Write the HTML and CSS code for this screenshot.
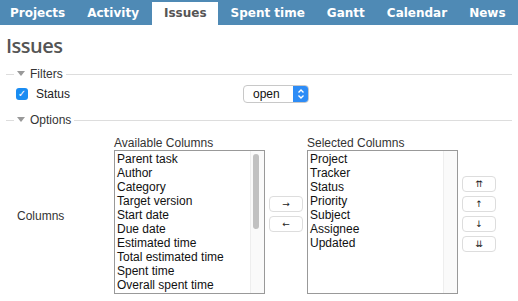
FILE: index.html
```html
<!DOCTYPE html>
<html lang="en">
<head>
    <meta charset="UTF-8">
    <title>Issues</title>
    <link rel="stylesheet" href="styles.css">
</head>
<body>
    <div class="menu">
        <a href="#">Projects</a>
        <a href="#">Activity</a>
        <a href="#" class="selected">Issues</a>
        <a href="#">Spent time</a>
        <a href="#">Gantt</a>
        <a href="#">Calendar</a>
        <a href="#">News</a>
    </div>
    <div class="content">
        <h2>Issues</h2>
        <fieldset class="group">
            <legend><span class="arrow"></span>Filters</legend>
            <div class="filter">
                <label class="status"><span class="check">&#10003;</span>Status</label>
                <div class="select">
                    <span>open</span>
                    <span class="spin">
                        <svg width="8" height="12" viewBox="0 0 8 12"><path d="M1.5 4.5 L4 2 L6.5 4.5 M1.5 7.5 L4 10 L6.5 7.5" fill="none" stroke="#fff" stroke-width="1.4"/></svg>
                    </span>
                </div>
            </div>
        </fieldset>
        <fieldset class="group">
            <legend><span class="arrow"></span>Options</legend>
            <div class="columns">
                <div class="col-label">Columns</div>
                <div class="list-wrap">
                    <div class="list-title">Available Columns</div>
                    <div class="list">
                        <ul>
                            <li>Parent task</li>
                            <li>Author</li>
                            <li>Category</li>
                            <li>Target version</li>
                            <li>Start date</li>
                            <li>Due date</li>
                            <li>Estimated time</li>
                            <li>Total estimated time</li>
                            <li>Spent time</li>
                            <li>Overall spent time</li>
                        </ul>
                        <div class="track"><div class="thumb"></div></div>
                    </div>
                </div>
                <div class="buttons move">
                    <button>&rarr;</button>
                    <button>&larr;</button>
                </div>
                <div class="list-wrap">
                    <div class="list-title">Selected Columns</div>
                    <div class="list">
                        <ul>
                            <li>Project</li>
                            <li>Tracker</li>
                            <li>Status</li>
                            <li>Priority</li>
                            <li>Subject</li>
                            <li>Assignee</li>
                            <li>Updated</li>
                        </ul>
                        <div class="track"></div>
                    </div>
                </div>
                <div class="buttons order">
                    <button>&#8648;</button>
                    <button>&uarr;</button>
                    <button>&darr;</button>
                    <button>&#8650;</button>
                </div>
            </div>
        </fieldset>
    </div>
</body>
</html>
```

FILE: styles.css
```css
body {
    font-family: "Liberation Sans", Arial, sans-serif;
    font-size: 12px;
    line-height: 14px;
    color: #222;
    margin: 0;
    padding: 0;
    background-color: #fff;
}
.menu {
    background-color: #4f8ab5;
    height: 25px;
    display: flex;
    align-items: flex-end;
    white-space: nowrap;
}
.menu a {
    font-family: "DejaVu Sans", Verdana, sans-serif;
    color: #fff;
    font-weight: bold;
    font-size: 12px;
    text-decoration: none;
    padding: 3px 11px 5px 11px;
    line-height: 14px;
}
.menu a:first-child {
    padding-left: 10px;
}
.menu a.selected {
    background-color: #fff;
    color: #555;
    padding: 4px 11px 5px 12px;
    margin: 0 2px;
}
.content {
    padding: 0 6px;
}
h2 {
    font-family: "Open Sans", sans-serif;
    font-size: 20px;
    line-height: 24px;
    font-weight: 600;
    color: #555;
    margin: 9px 0 9px 0;
    letter-spacing: -0.5px;
}
.group {
    border: none;
    border-top: 1px solid #ddd;
    margin: 0;
    padding: 0;
}
.group legend {
    font-size: 12px;
    color: #333;
    padding: 0 3px 0 3px;
    margin-left: 8px;
}
.arrow {
    display: inline-block;
    width: 0;
    height: 0;
    border-left: 4px solid transparent;
    border-right: 4px solid transparent;
    border-top: 5px solid #999;
    margin-right: 5px;
    vertical-align: 2px;
}
.filter {
    display: flex;
    align-items: center;
    height: 26px;
    margin-bottom: 6px;
}
.status {
    display: flex;
    align-items: center;
    width: 227px;
    padding-left: 10px;
}
.check {
    display: inline-block;
    width: 12px;
    height: 12px;
    border-radius: 3px;
    background-color: #1a8cf2;
    color: #fff;
    font-family: "DejaVu Sans", sans-serif;
    font-size: 10px;
    font-weight: bold;
    line-height: 12px;
    text-align: center;
    margin-right: 8px;
}
.select {
    display: flex;
    width: 66px;
    height: 18px;
    border: 1px solid #c8c8c8;
    border-radius: 4px;
    box-sizing: border-box;
    overflow: hidden;
}
.select span:first-child {
    flex: 1;
    padding-left: 9px;
    line-height: 16px;
    color: #111;
}
.spin {
    width: 15px;
    background-color: #2d8cf6;
    display: flex;
    align-items: center;
    justify-content: center;
}
.columns {
    display: flex;
    align-items: flex-start;
    padding-top: 9px;
}
.col-label {
    width: 108px;
    padding-left: 11px;
    box-sizing: border-box;
    margin-top: 73px;
    color: #333;
}
.list-title {
    color: #333;
    line-height: 14px;
}
.list {
    display: flex;
    width: 151px;
    height: 144px;
    border: 1px solid #999;
    box-sizing: border-box;
}
.list ul {
    list-style: none;
    margin: 0;
    padding: 1px 0 0 2px;
    flex: 1;
}
.list li {
    color: #111;
    white-space: nowrap;
}
.track {
    width: 11px;
    border-left: 1px solid #eee;
    background-color: #fafafa;
    padding: 3px 0 0 2px;
}
.thumb {
    width: 6px;
    height: 75px;
    border-radius: 3px;
    background-color: #c1c1c1;
}
.buttons {
    display: flex;
    flex-direction: column;
    gap: 4px;
    padding: 0 4px;
}
.buttons.move {
    margin-top: 60px;
}
.buttons.order {
    margin-top: 40px;
}
.buttons button {
    width: 34px;
    height: 16px;
    border: 1px solid #ddd;
    border-radius: 4px;
    background-color: #fff;
    font-size: 9px;
    line-height: 12px;
    padding: 0;
    color: #222;
    font-family: "DejaVu Sans", sans-serif;
}
```
